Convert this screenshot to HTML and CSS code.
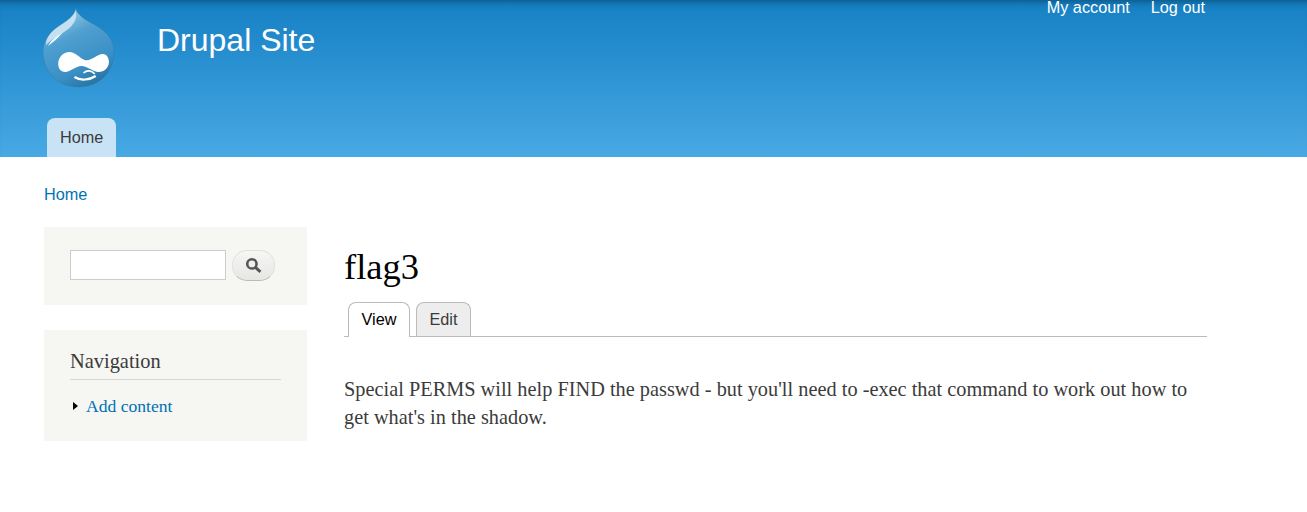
FILE: index.html
```html
<!DOCTYPE html>
<html lang="en">
<head>
    <meta charset="UTF-8">
    <title>flag3 | Drupal Site</title>
    <link rel="stylesheet" href="styles.css">
</head>
<body>
    <header class="header">
        <div class="header-top">
            <a class="logo" href="#">
                <svg width="72" height="80" viewBox="0 0 71 80" preserveAspectRatio="none">
                    <defs>
                        <linearGradient id="dropFill" x1="0.25" y1="0" x2="0.7" y2="1">
                            <stop offset="0" stop-color="#a8d2ea"/>
                            <stop offset="0.35" stop-color="#4f9fd0"/>
                            <stop offset="0.75" stop-color="#3a8fc4"/>
                            <stop offset="1" stop-color="#28719f"/>
                        </linearGradient>
                    </defs>
                    <path d="M32 0C32 6 26 11 17 17C7 24 0 32 0 44C0 65 16 79 35 79C56 79 70 64 70 44C70 27 57 20 46 14C39 10 34 6 32 0Z" fill="url(#dropFill)" stroke="#2f7cad" stroke-width="0.5"/>
                    <path d="M32 3C29 11 20 15 12 21C7 25 3 30 3 37C10 29 22 25 28 18C32 13 34 9 32 3Z" fill="#c4e1f2"/>
                    <path d="M5 38C8 32 13 28 19 25C15 30 10 34 5 38Z" fill="#f0f8fc"/>
                    <path d="M15 56C15 49 20 44 26 44C32 44 36 50 41 52C47 54 53 46 59 46C63 46 65 50 65 54C65 60 60 64 55 64C49 64 44 58 38 58C32 58 27 64 22 64C18 64 15 61 15 56Z" fill="#fff"/>
                    <path d="M31 69C37 73 46 72 52 68" fill="none" stroke="#fff" stroke-width="2.2"/>
                    <path d="M40 65C43 62 48 62 51 66" fill="none" stroke="#fff" stroke-width="1.6"/>
                </svg>
            </a>
            <a class="site-name" href="#">Drupal Site</a>
            <ul class="secondary-menu">
                <li><a href="#">My account</a></li>
                <li><a href="#">Log out</a></li>
            </ul>
        </div>
        <ul class="main-menu">
            <li><a href="#">Home</a></li>
        </ul>
    </header>
    <div class="main-content">
        <nav class="breadcrumb"><a href="#">Home</a></nav>
        <div class="columns">
            <aside class="sidebar">
                <div class="block search-block">
                    <input class="search-input" type="text">
                    <button class="search-button" type="button" aria-label="Search">
                        <svg width="17" height="17" viewBox="0 0 16 16">
                            <circle cx="6.5" cy="6.5" r="4.4" fill="none" stroke="#555" stroke-width="2.4"/>
                            <path d="M9.8 9.8L14.5 14" stroke="#555" stroke-width="2.8"/>
                        </svg>
                    </button>
                </div>
                <div class="block nav-block">
                    <h2>Navigation</h2>
                    <ul>
                        <li><a href="#">Add content</a></li>
                    </ul>
                </div>
            </aside>
            <main class="content">
                <h1 class="title">flag3</h1>
                <ul class="tabs">
                    <li class="active"><a href="#">View</a></li>
                    <li><a href="#">Edit</a></li>
                </ul>
                <p class="body-text">Special PERMS will help FIND the passwd - but you'll need to -exec that command to work out how to get what's in the shadow.</p>
            </main>
        </div>
    </div>
</body>
</html>
```

FILE: styles.css
```css
body {
    margin: 0;
    font-family: "Liberation Serif", serif;
    color: #3b3b3b;
    background-color: #fff;
}
a {
    text-decoration: none;
    color: #0071b3;
}
ul {
    list-style: none;
    margin: 0;
    padding: 0;
}
.header {
    height: 157px;
    box-sizing: border-box;
    background: linear-gradient(#1580c4, #48a9e4);
    box-shadow: inset 0 8px 8px -8px rgba(0,0,0,0.5);
    font-family: "Liberation Sans", Arial, sans-serif;
    display: flex;
    flex-direction: column;
    justify-content: space-between;
}
.header-top {
    display: flex;
    align-items: flex-start;
    padding: 8px 102px 0 43px;
}
.logo {
    display: block;
    height: 80px;
}
.site-name {
    margin: 14px 0 0 42px;
    font-size: 32px;
    line-height: 36px;
    color: #fff;
}
.secondary-menu {
    margin: -9px 0 0 auto;
    display: flex;
    gap: 21px;
}
.secondary-menu a {
    font-size: 16.25px;
    line-height: 16px;
    color: #fff;
}
.main-menu {
    display: flex;
    padding-left: 47px;
}
.main-menu a {
    display: block;
    height: 39px;
    padding: 0 13px;
    line-height: 39px;
    font-size: 16.25px;
    color: #3b3b3b;
    background-color: #c9e3f6;
    border-radius: 8px 8px 0 0;
}
.main-content {
    padding: 0 100px 0 44px;
}
.breadcrumb {
    padding-top: 28px;
    font-family: "Liberation Sans", Arial, sans-serif;
    font-size: 16.25px;
    line-height: 19px;
}
.columns {
    display: flex;
    margin-top: 23px;
}
.sidebar {
    width: 263px;
    flex-shrink: 0;
}
.block {
    box-sizing: border-box;
    background-color: #f6f6f2;
}
.search-block {
    height: 78px;
    padding: 23px 26px 0;
    display: flex;
    align-items: flex-start;
    gap: 6px;
}
.search-input {
    box-sizing: border-box;
    width: 156px;
    height: 30px;
    margin: 0;
    border: 1px solid #ccc;
    background-color: #fff;
}
.search-button {
    width: 43px;
    height: 31px;
    padding: 0;
    border: 1px solid #e0e0e0;
    border-bottom-color: #bbb;
    border-radius: 15px;
    background: linear-gradient(#f6f6f5, #e6e6e4);
    display: flex;
    align-items: center;
    justify-content: center;
}
.nav-block {
    height: 111px;
    margin-top: 25px;
    padding: 20px 26px 0;
}
.nav-block h2 {
    margin: 0;
    padding-bottom: 7px;
    width: 211px;
    border-bottom: 1px solid #d6d6d6;
    font-size: 20.4px;
    line-height: 22px;
    font-weight: normal;
}
.nav-block ul {
    margin-top: 16px;
}
.nav-block li {
    position: relative;
    padding-left: 16px;
    font-size: 17.6px;
    line-height: 20px;
}
.nav-block li::before {
    content: "";
    position: absolute;
    left: 3px;
    top: 6px;
    border-left: 5px solid #000;
    border-top: 4.5px solid transparent;
    border-bottom: 4.5px solid transparent;
}
.content {
    margin-left: 37px;
    width: 863px;
}
.title {
    margin: 19px 0 0;
    font-size: 36.5px;
    line-height: 42px;
    font-weight: normal;
    color: #000;
}
.tabs {
    display: flex;
    gap: 6px;
    margin-top: 14px;
    padding-left: 4px;
    border-bottom: 1px solid #bbb;
    font-family: "Liberation Sans", Arial, sans-serif;
}
.tabs li {
    margin-bottom: -1px;
}
.tabs a {
    display: block;
    box-sizing: border-box;
    height: 34px;
    padding: 0 12.5px;
    line-height: 32px;
    font-size: 16.25px;
    color: #3b3b3b;
    background-color: #ededed;
    border: 1px solid #bbb;
    border-bottom: 0;
    border-radius: 8px 8px 0 0;
}
.tabs .active a {
    height: 35px;
    background-color: #fff;
    color: #000;
}
.body-text {
    margin: 38px 0 0;
    font-size: 20.3px;
    letter-spacing: 0.02px;
    line-height: 28px;
}
```
